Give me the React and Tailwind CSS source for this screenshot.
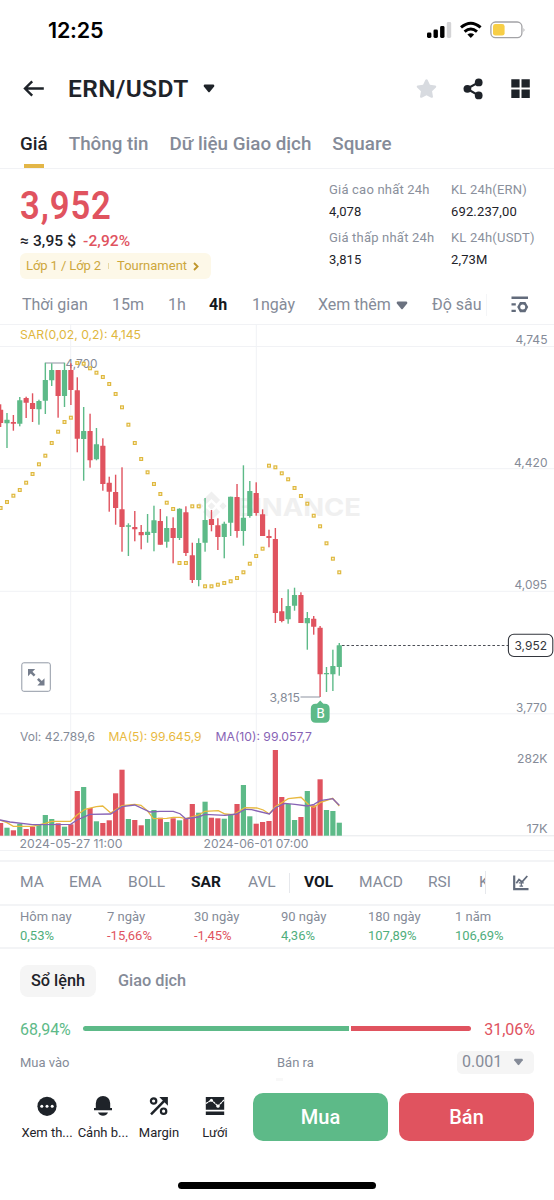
import { FaStar } from "react-icons/fa";

// [up, high, bodyTop, bodyBottom, low, sar, volumeTop]
const CANDLES = [
  [0, 404.3, 409.7, 423, 427, 508, 823],
  [1, 413, 419.7, 423.3, 448, 502, 827.7],
  [0, 415, 422, 423.7, 430.7, 495.7, 830.3],
  [1, 397, 400.3, 423.7, 426.3, 490, 823.7],
  [0, 396.7, 398, 402.7, 418, 482.7, 829],
  [0, 393.3, 403, 409, 422, 474, 826.7],
  [1, 399.7, 401, 409.3, 424.7, 464.3, 825],
  [1, 362.7, 380, 400.7, 414, 455.7, 815],
  [1, 363.3, 370, 380.3, 386, 443, 819],
  [0, 370, 370, 396, 417.7, 431.7, 823.3],
  [1, 362.7, 370, 396, 407, 422, 826.7],
  [0, 363.3, 370, 390, 405, 417.7, 824.3],
  [0, 377.3, 390.3, 438.7, 452.3, 363, 791],
  [1, 407, 431, 439, 480.7, 363.7, 787],
  [0, 413.7, 431, 460.3, 467.7, 368.3, 808],
  [1, 428, 444.3, 459.3, 460.3, 372.7, 821.3],
  [0, 438.3, 445.7, 484, 490.7, 377, 823],
  [0, 476.7, 482.7, 491.7, 511.7, 384, 820.3],
  [0, 474.7, 492, 508, 524.7, 394, 793.3],
  [0, 467.3, 509.3, 527, 551.7, 407.3, 769.7],
  [1, 523.3, 525.3, 526.7, 556, 424.7, 819],
  [0, 511, 527, 529.3, 541.3, 443, 820],
  [0, 525, 532, 535.3, 549.3, 459, 825.3],
  [1, 514, 531.7, 535, 542.7, 472.3, 819],
  [1, 505.7, 520.3, 533, 551.3, 484, 810],
  [0, 509, 521, 544.7, 544.7, 494, 817.7],
  [1, 516.3, 528, 541.7, 547.7, 502.7, 822],
  [0, 517.3, 528, 538, 563.3, 509, 818.3],
  [1, 508.3, 508.7, 538, 540, 563, 820.3],
  [0, 506.3, 512.3, 553, 556, 563, 819],
  [0, 542.7, 555.3, 580, 583, 506.3, 804],
  [1, 538.3, 543, 580, 586.3, 506.3, 812.7],
  [1, 498, 520, 542.7, 551.7, 586.3, 801.7],
  [0, 510, 519, 525, 531.3, 586.3, 817.7],
  [0, 518.3, 525.3, 537, 550, 584.7, 818.3],
  [1, 521.7, 523.7, 537, 558.3, 583, 818.7],
  [1, 496.7, 496.7, 522.7, 536, 581.3, 815],
  [0, 484, 497, 531, 537.7, 578, 804],
  [1, 465.3, 517.7, 531, 545.7, 572.3, 785],
  [1, 481, 491, 516, 517.7, 563.7, 816.3],
  [0, 482.3, 493, 513, 515.7, 556, 823.7],
  [0, 509.3, 514.3, 536, 536, 548.7, 822],
  [0, 529.7, 536, 538, 547.3, 465.7, 821],
  [0, 528, 539, 613, 623, 467.3, 750],
  [0, 598, 611.3, 621, 622.3, 473.3, 797],
  [1, 589.3, 606, 619.3, 623.7, 479.3, 804],
  [1, 587.7, 595, 605.7, 610.7, 488, 820],
  [0, 592.3, 595, 623, 623, 496, 817],
  [1, 612, 618, 623.3, 649.7, 503.7, 791],
  [0, 616, 618.7, 626.7, 634.7, 515.7, 805.3],
  [0, 626, 627.7, 674.3, 697, 526.3, 779.3],
  [1, 667, 673, 674.3, 692, 543.3, 810],
  [1, 649.7, 666, 674.3, 691, 558.7, 811],
  [1, 643, 645.3, 667, 675.7, 572.3, 822.7],
];

const MA5 =
  "0,820 7,822.7 13.3,826.3 32.3,826.3 45.3,823.3 51.7,821.3 70.7,821.3 77,815 85,809.3 96.3,806.7 102.7,806 110.7,813 122,805.7 134.7,804.3 141,805.3 147.3,810.7 153.3,818.7 166.7,818.3 173.3,817.3 180,817.3 185.7,818.7 198.3,815 205,811.3 218.3,810.7 225,814 233.3,814.7 245,807.7 256.7,808 263.3,810 269.3,814 275.3,806.7 288.3,798.7 301,797.3 310,806 314,807.3 320,802.7 332.7,798.3 339.3,806";
const MA10 =
  "0,820 10,822 32.3,824.7 70.7,824.3 77,820 90,814.3 110.7,814 122,806.7 134.7,805 150,812 160,811.3 173.3,811.3 180,813.7 185.7,818.7 198.3,817 205,814.3 225,815.3 236.7,814 245,809.3 251.7,809.7 269.3,814 275.3,807.7 285,803.3 295,804.3 307.3,806 314,804.3 320,800.7 332.7,798.7 339.3,805.3";

const STATS = [
  ["Giá cao nhất 24h", "4,078"],
  ["KL 24h(ERN)", "692.237,00"],
  ["Giá thấp nhất 24h", "3,815"],
  ["KL 24h(USDT)", "2,73M"],
];

const CHANGES = [
  ["Hôm nay", "0,53%"],
  ["7 ngày", "-15,66%"],
  ["30 ngày", "-1,45%"],
  ["90 ngày", "4,36%"],
  ["180 ngày", "107,89%"],
  ["1 năm", "106,69%"],
];

function Caret({ className }) {
  return (
    <svg viewBox="0 0 12 10" className={className} fill="currentColor">
      <path d="M1.3 0.5h9.4q1 0 1 1v1.2L7 8.7q-1 1.2-2 0L0.3 2.7V1.5q0-1 1-1z" />
    </svg>
  );
}

function StatusBar() {
  return (
    <div className="flex h-[60px] items-center justify-between pl-[48px] pr-[28px]">
      <span className="font-['Inter'] text-[21.5px] font-semibold tracking-[-0.2px] text-black">12:25</span>
      <svg width="102" height="20" viewBox="424 21 102 20" className="-mt-[2px]">
        <g>
          <rect x="427" y="34.5" width="4.4" height="5.5" rx="1.4" />
          <rect x="433.5" y="31.5" width="4.4" height="8.5" rx="1.4" />
          <rect x="440.1" y="28" width="4.4" height="12" rx="1.4" />
          <rect x="446.8" y="24" width="4.4" height="16" rx="1.4" fill="#d4d4d6" />
        </g>
        <g fill="none" stroke="#000" strokeWidth="3">
          <path d="M461 29.4q9.8-8.4 19.6 0" />
          <path d="M464.6 33.6q6.2-5.2 12.4 0" />
        </g>
        <path d="M467.4 36.6q3.4-2.5 6.8 0L470.8 39.9z" />
        <rect x="490.9" y="24" width="31" height="15.6" rx="4.6" fill="#fff" stroke="#a3a3a6" strokeWidth="1.3" />
        <rect x="493" y="26" width="11.6" height="11.6" rx="2.4" fill="#f7ce46" />
        <path d="M523.6 29.7q1.8 2.3 0 4.6z" fill="#8a8a8d" />
      </svg>
    </div>
  );
}

function Header() {
  return (
    <header className="flex h-[57px] items-center pl-[23px] pr-[24px] text-[#1e2329]">
      <svg width="22" height="18" viewBox="0 0 22 18" fill="none" stroke="currentColor" strokeWidth="2.4">
        <path d="M20.8 8.5H2.5M9.2 1.3 2 8.5l7.2 7.2" />
      </svg>
      <h1 className="ml-[23px] mt-[2px] text-[24.5px] font-semibold leading-none tracking-[0.4px]">ERN/USDT</h1>
      <Caret className="ml-[14px] h-[9px] w-[12px]" />
      <FaStar className="ml-auto h-[21px] w-[21px] text-[#d8dbe0]" />
      <svg width="20" height="22" viewBox="0 0 20 22" className="ml-[26px]" fill="currentColor">
        <path d="M4 10.8 15.5 4.4M4 10.8l11.5 6.6" stroke="currentColor" strokeWidth="2.2" />
        <circle cx="4.4" cy="10.8" r="3.9" />
        <circle cx="15.7" cy="4.4" r="3.9" />
        <circle cx="15.7" cy="17.4" r="3.9" />
      </svg>
      <svg width="19" height="20" viewBox="0 0 19 20" className="ml-[28px]" fill="currentColor">
        <path d="M0.3 0.3h8.3v8.3H0.3zM10.5 0.3h8.3v8.3h-8.3zM0.3 10.6h8.3v8.3H0.3zM10.5 10.6h8.3v8.3h-8.3z" />
      </svg>
    </header>
  );
}

function PriceSummary() {
  return (
    <section className="flex h-[117px] justify-between pl-5">
      <div>
        <p className="mt-[17px] w-[100px] origin-left scale-x-[0.9] text-[38.5px] font-semibold leading-[40px] tracking-[1px] text-[#e0535f]">
          3,952
        </p>
        <p className="mt-[6px] flex gap-[7px] text-[15.5px] font-medium leading-[18px] tracking-[0.1px]">
          <span className="text-[#1e2329]">≈ 3,95 $</span>
          <span className="text-[#e0535f]">-2,92%</span>
        </p>
        <div className="mt-[3px] flex h-[26px] w-[191px] items-center rounded-md bg-[#fdf8e8] pl-[6px] text-[13px] text-[#cda73c]">
          <span className="w-[76px] whitespace-nowrap tracking-[-0.1px]">Lớp 1 / Lớp 2</span>
          <span className="ml-[6px] mr-[8px] h-[6px] w-px bg-[#e8d8a4]" />
          <span>Tournament</span>
          <svg width="6" height="9" viewBox="0 0 6 9" className="ml-[6px]" fill="none" stroke="#bf962b" strokeWidth="1.8">
            <path d="M1 1l3.6 3.5L1 8" />
          </svg>
        </div>
      </div>
      <div className="mt-[11px] grid w-[225px] grid-cols-[122px_103px] grid-rows-[48px_48px]">
        {STATS.map(([label, value]) => (
          <div key={label} className="whitespace-nowrap">
            <p className="text-[13px] leading-[20px] tracking-[0.2px] text-[#8a909c]">{label}</p>
            <p className="mt-[2px] text-[13px] leading-[20px] tracking-[0.15px] text-[#1e2329]">{value}</p>
          </div>
        ))}
      </div>
    </section>
  );
}

function Intervals() {
  return (
    <div className="flex h-[38px] items-center whitespace-nowrap pl-[22px] text-[16px] text-[#858b98]">
      <span className="w-[90px]">Thời gian</span>
      <span className="w-[56px]">15m</span>
      <span className="w-[41px]">1h</span>
      <span className="w-[43px] font-bold text-[#14181e]">4h</span>
      <span className="w-[66px]">1ngày</span>
      <span className="flex w-[114px] items-center gap-[5px]">
        Xem thêm
        <Caret className="h-[9px] w-[12px] text-[#6b7280]" />
      </span>
      <span>Độ sâu</span>
      <span className="ml-[4px] h-[22px] w-px bg-[#f4f5f7]" />
      <svg width="18" height="18" viewBox="0 0 18 18" className="ml-auto mr-[25px]" fill="#626b7b">
        <path d="M0.5 0.5h16.5v2.4H0.5zM0.5 7.2h4.3v2.4H0.5zM0.5 13.7h4.3v2.4H0.5z" />
        <path
          fillRule="evenodd"
          d="M9 5.9h5.4l2.8 5.1-2.8 5.2H9L6.2 11zM11.7 8.5a2.5 2.5 0 1 0 0 5 2.5 2.5 0 0 0 0-5z"
        />
      </svg>
    </div>
  );
}

function Label({ x, y, w, fill = "#858b98", children }) {
  return (
    <text x={x} y={y} textLength={w} lengthAdjust="spacingAndGlyphs" fontSize="11.8" fill={fill}>
      {children}
    </text>
  );
}

function Chart() {
  const step = 6.39;
  return (
    <svg width="554" height="536" viewBox="0 324 554 536" className="block font-['Inter']">
      {/* grid */}
      <g stroke="#f1f2f5" strokeWidth="1">
        <path d="M0 324.5H554M0 346.5H554M0 468.7H554M0 591.3H554M0 713.8H554M0 850.5H554" />
        <path d="M70.7 324V836M256.3 324V836" />
        <path d="M0 835.8H554" stroke="#e6e8ec" />
      </g>

      {/* watermark */}
      <g fill="#f0f0f0">
        <path d="M211.5 491.5l8.6 8.6-3.7 3.7-4.9-4.9-4.9 4.9-3.7-3.7zM211.5 520.5l-8.6-8.6 3.7-3.7 4.9 4.9 4.9-4.9 3.7 3.7zM199.6 502.3l3.7 3.7-3.7 3.7-3.7-3.7zM223 502.3l3.7 3.7-3.7 3.7-3.7-3.7zM211.5 502.3l3.7 3.7-3.7 3.7-3.7-3.7z" />
        <text x="236" y="516" fontSize="24" fontWeight="700" textLength="125" lengthAdjust="spacingAndGlyphs">
          BINANCE
        </text>
      </g>

      <Label x="20" y="339" w="121" fill="#e0b73e">SAR(0,02, 0,2): 4,145</Label>
      <path d="M45.3 363H64.4" stroke="#8d93a0" strokeWidth="1" fill="none" />
      <Label x="65.5" y="368" w="32">4,700</Label>

      {CANDLES.map(([up, high, top, bottom, low, sar, vol], i) => {
        const x = 0.6 + i * step;
        const color = up ? "#5dba88" : "#e0535f";
        return (
          <g key={i} fill={color}>
            <rect x={x - 0.7} y={high} width="1.4" height={low - high} />
            <rect x={x - 2.6} y={top} width="5.2" height={bottom - top} rx="0.3" />
            <rect x={x - 2.6} y={vol} width="5.2" height={835.7 - vol} />
            <rect x={x - 1.4} y={sar - 1.4} width="2.8" height="2.8" fill="#fdf6d8" stroke="#dfb83f" strokeWidth="1.2" />
          </g>
        );
      })}
      <polyline points={MA5} fill="none" stroke="#e8b93f" strokeWidth="1.3" />
      <polyline points={MA10} fill="none" stroke="#8763b5" strokeWidth="1.3" />

      {/* low marker and buy badge */}
      <Label x="269.5" y="702" w="30.5">3,815</Label>
      <path d="M300.5 697H320" stroke="#8d93a0" />
      <path d="M320.2 700.5l3.2 3.2h1.2q5 0 5 5v9q0 5-5 5h-8.8q-5 0-5-5v-9q0-5 5-5h1.2z" fill="#5dba88" />
      <text x="320.6" y="718.4" fontSize="12.5" fontWeight="500" fill="#fff" textAnchor="middle">B</text>

      {/* current price line */}
      <path d="M342 645.5H508" stroke="#4a4d55" strokeDasharray="2.6 2.1" />
      <rect x="508.4" y="634.3" width="44.4" height="22.2" rx="5.5" fill="#fff" stroke="#33363d" strokeWidth="1.1" />
      <Label x="514.5" y="650" w="32.5" fill="#33363d">3,952</Label>

      <Label x="515.5" y="344" w="32">4,745</Label>
      <Label x="514" y="466.5" w="33.5">4,420</Label>
      <Label x="514.5" y="589" w="32.5">4,095</Label>
      <Label x="516" y="711.5" w="31">3,770</Label>
      <Label x="517" y="762.5" w="30.5">282K</Label>
      <Label x="526.5" y="832.5" w="21">17K</Label>

      {/* fullscreen toggle */}
      <rect x="21.8" y="662.8" width="28.5" height="28.5" rx="2" fill="#fff" stroke="#9299a6" />
      <path d="M28 669h7.2l-2.7 2.7 3 3-1.8 1.8-3-3L28 676.2zM44.5 685.5h-7.2l2.7-2.7-3-3 1.8-1.8 3 3 2.7-2.7z" fill="#757d8c" />

      <Label x="20" y="741" w="75">Vol: 42.789,6</Label>
      <Label x="108.5" y="741" w="93" fill="#e8b93f">MA(5): 99.645,9</Label>
      <Label x="215.5" y="741" w="96.5" fill="#8763b5">MA(10): 99.057,7</Label>
      <Label x="19.5" y="848" w="103">2024-05-27 11:00</Label>
      <Label x="203.5" y="848" w="105">2024-06-01 07:00</Label>
    </svg>
  );
}

function Indicators() {
  return (
    <div className="flex h-[43.5px] items-center whitespace-nowrap border-t-2 border-[#f3f4f6] pl-[20px] text-[15.5px] text-[#858b98]">
      <span className="w-[49px]">MA</span>
      <span className="w-[59px]">EMA</span>
      <span className="w-[63px]">BOLL</span>
      <span className="w-[57px] font-bold text-[#14181e]">SAR</span>
      <span className="w-[41px]">AVL</span>
      <span className="mr-[14px] h-[20px] w-px bg-[#e6e8ec]" />
      <span className="w-[55px] font-bold text-[#14181e]">VOL</span>
      <span className="w-[69px]">MACD</span>
      <span className="w-[51px]">RSI</span>
      <span className="w-[7px] overflow-hidden border-r border-[#e6e8ec]">K</span>
      <svg width="16" height="16" viewBox="0 0 16 16" className="ml-auto mr-[25px]" fill="none" stroke="#626b7b">
        <path d="M1.2 0.5v13.7H15.5" strokeWidth="2.2" />
        <path d="M3.3 8.2 6 4.5l3 2.5 5.3-6" strokeWidth="1.8" />
        <path d="M5.8 7.8h5M8.3 7.8v3.4M6.5 11.2h3.6" strokeWidth="1.2" />
      </svg>
    </div>
  );
}

function OrderBook() {
  return (
    <section className="h-[144px] px-[20px] pt-[15.5px]">
      <div className="flex h-[32px] items-center gap-[22px] text-[16.3px] font-medium">
        <span className="flex h-[32px] w-[76px] items-center justify-center rounded-lg bg-[#f5f5f5] pt-[2px] text-[#1e2329]">
          Sổ lệnh
        </span>
        <span className="pt-[2px] text-[#858b98]">Giao dịch</span>
      </div>
      <div className="mt-[22px] flex h-[20px] items-center text-[16px]">
        <span className="w-[63px] pt-[2px] text-[#5dba88]">68,94%</span>
        <div className="flex w-[388px] gap-[2.5px]">
          <div className="h-[5px] rounded-l-full bg-[#5dba88]" style={{ width: "68.5%" }} />
          <div className="h-[5px] flex-1 rounded-r-full bg-[#e0535f]" />
        </div>
        <span className="ml-auto -mr-[1px] pt-[2px] text-[#e0535f]">31,06%</span>
      </div>
      <div className="mt-[12px] flex h-[23px] items-center text-[13px] text-[#858b98]">
        <span className="w-[257px] pt-[2px]">Mua vào</span>
        <span className="pt-[2px]">Bán ra</span>
        <span className="ml-auto flex h-[23px] w-[77px] items-center justify-between rounded-[5px] bg-[#f5f5f5] pl-[5px] pr-[11px] text-[16px]">
          0.001
          <Caret className="h-[8px] w-[9px]" />
        </span>
      </div>
      <div className="ml-[256px] mt-[4px] h-[3px] w-[7px] bg-[#f8f8f8]" />
    </section>
  );
}

function Tool({ label, children }) {
  return (
    <div className="flex w-[56px] flex-col items-center whitespace-nowrap text-[13px] text-[#1e2329]">
      <svg width="20" height="20" viewBox="0 0 20 20" fill="#1e2329">
        {children}
      </svg>
      <span className="mt-[7px] leading-[20px]">{label}</span>
    </div>
  );
}

function BottomBar() {
  return (
    <footer className="flex h-[90px] pl-[19px] pr-[20px]">
      <div className="flex pt-[3px]">
        <Tool label="Xem th...">
          <circle cx="10" cy="10.3" r="9.6" />
          <g fill="#fff">
            <circle cx="4.8" cy="10.3" r="1.5" />
            <circle cx="10" cy="10.3" r="1.5" />
            <circle cx="15.2" cy="10.3" r="1.5" />
          </g>
        </Tool>
        <Tool label="Cảnh b...">
          <path d="M2.8 7.2a7.2 7.2 0 0 1 14.4 0V12l1.8 0v2.3H1V12h1.8zM5 16.6h10q-1.6 3.2-5 3.2t-5-3.2z" />
        </Tool>
        <Tool label="Margin">
          <circle cx="4.6" cy="5" r="2.7" fill="none" stroke="#1e2329" strokeWidth="2.2" />
          <circle cx="14.6" cy="15.2" r="2.7" fill="none" stroke="#1e2329" strokeWidth="2.2" />
          <path d="M2 18.3 15.5 4.7" stroke="#1e2329" strokeWidth="2.5" />
          <path d="M10.3 1.1h8.6v8.6z" />
        </Tool>
        <Tool label="Lưới">
          <path d="M0.8 1.1h18.4v12.6H0.8zM0.8 15.6h18.4v3.4H0.8z" />
          <path d="M0.8 7.6 6.4 4l6.6 6.2 6.2-6.4" fill="none" stroke="#fff" strokeWidth="1.2" strokeDasharray="2.6 0.5" />
          <circle cx="6.4" cy="4.2" r="1.5" fill="#fff" />
          <circle cx="13" cy="10.2" r="1.6" fill="#fff" />
        </Tool>
      </div>
      <div className="ml-auto flex gap-[11px] text-[20px] font-medium text-white">
        <button className="h-[48px] w-[135px] rounded-[10px] bg-[#5dba88]">Mua</button>
        <button className="h-[48px] w-[135px] rounded-[10px] bg-[#e0535f]">Bán</button>
      </div>
    </footer>
  );
}

export default function App() {
  return (
    <main className="h-[1200px] w-[554px] overflow-hidden bg-white font-['Roboto','Noto_Sans',sans-serif]">
      <StatusBar />
      <Header />

      <nav className="flex h-[52px] gap-[21px] border-b border-[#f1f2f5] px-5 pt-[15px] text-[18.8px] font-medium leading-[24px] text-[#858b98]">
        <span className="flex flex-col items-center justify-between text-[#1e2329]">
          Giá
          <i className="h-[4px] w-[20px] bg-[#e3b647]" />
        </span>
        <span>Thông tin</span>
        <span>Dữ liệu Giao dịch</span>
        <span>Square</span>
      </nav>

      <PriceSummary />
      <Intervals />
      <Chart />
      <Indicators />

      <section className="flex h-[45.5px] border-y-2 border-[#f3f4f6] pl-5 pt-[1px]">
        {CHANGES.map(([label, value]) => (
          <div key={label} className="w-[87px] whitespace-nowrap text-[13px] leading-[19px]">
            <p className="text-[#858b98]">{label}</p>
            <p className={value.startsWith("-") ? "text-[#e0535f]" : "text-[#4fae7c]"}>{value}</p>
          </div>
        ))}
      </section>

      <OrderBook />
      <BottomBar />
      <div className="mx-auto -mt-px h-[7px] w-[198px] rounded-full bg-black" />
    </main>
  );
}
